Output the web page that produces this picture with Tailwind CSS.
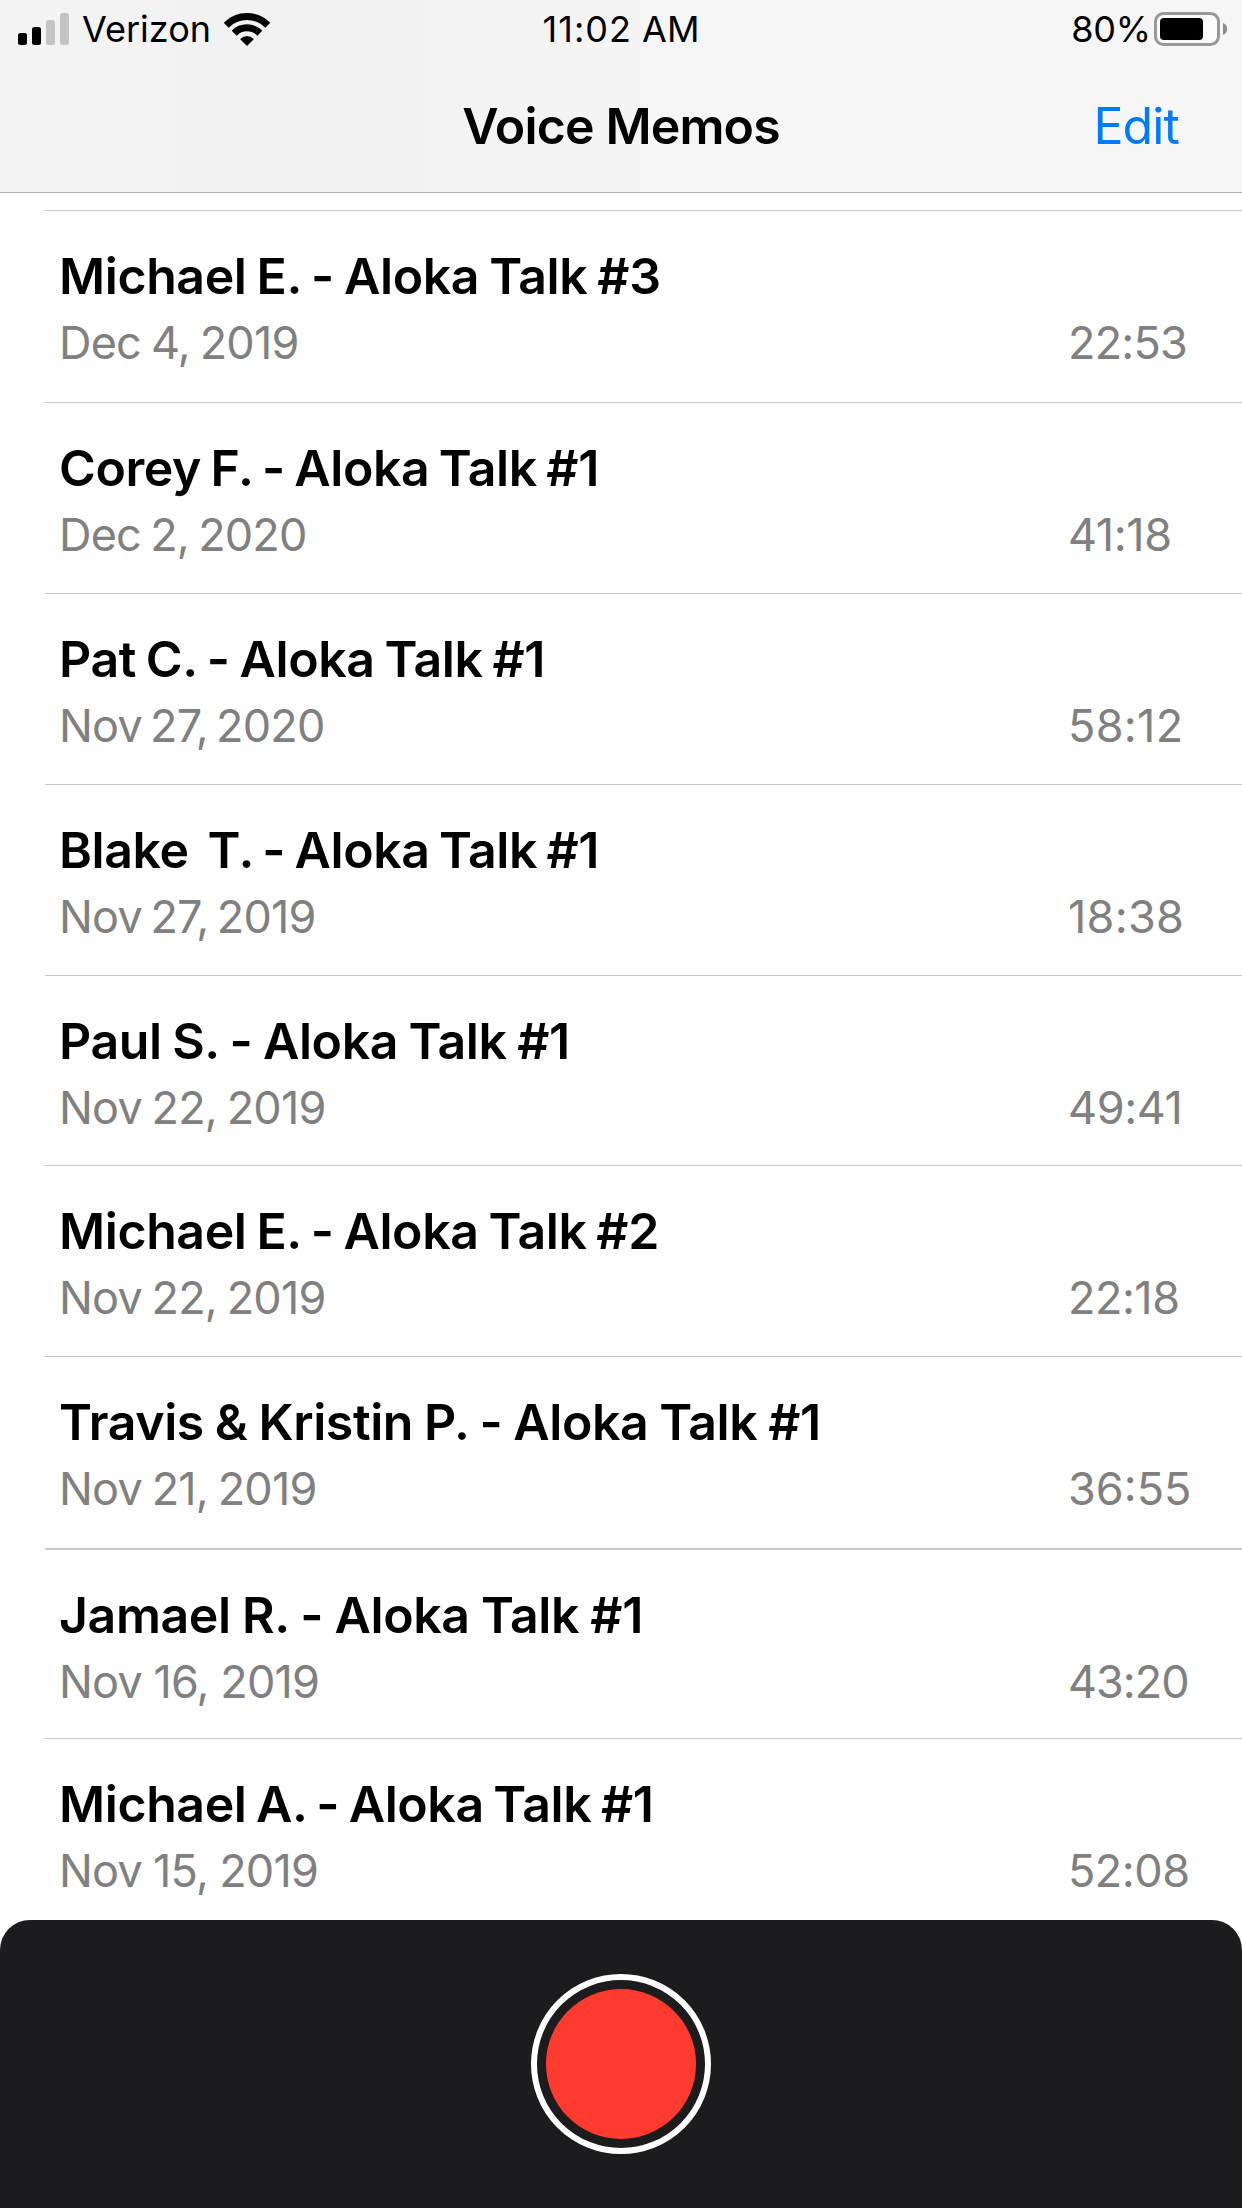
<!DOCTYPE html>
<html lang="en">
<head>
<meta charset="utf-8">
<title>Voice Memos</title>
<script src="https://cdn.jsdelivr.net/npm/@tailwindcss/browser@4"></script>
</head>
<body class="bg-[#fefefe]">
<div class="w-[1242px] h-[2208px] flex flex-col overflow-hidden font-['Inter',sans-serif] text-black bg-[#fefefe]">

  <header class="h-[193px] shrink-0 border-b border-[#b2b2b2] bg-linear-to-r from-[#f4f4f4] from-0% via-[#f1f1f1] via-25% to-[#f6f6f6] to-60%">
    <!-- status bar -->
    <div class="h-[58px] grid grid-cols-3 items-center text-[36px] leading-[58px]">
      <div class="flex items-center pl-[18px]">
        <svg class="w-[51px] h-[58px]" viewBox="0 0 51 58">
          <rect x="0" y="33" width="9" height="12" rx="2.5" fill="#000"/>
          <rect x="14" y="27" width="9" height="18" rx="2.5" fill="#000"/>
          <rect x="28" y="20" width="9" height="25" rx="2.5" fill="#c4c4c4"/>
          <rect x="42" y="13" width="9" height="32" rx="2.5" fill="#c4c4c4"/>
        </svg>
        <span class="ml-[13px]">Verizon</span>
        <svg class="ml-[12px] w-[48px] h-[58px]" viewBox="0 0 48 58" fill="none" stroke="#000">
          <path d="M3.2 25.2A29.4 29.4 0 0 1 44.8 25.2" stroke-width="7"/>
          <path d="M11.2 33.2A18 18 0 0 1 36.8 33.2" stroke-width="7"/>
          <path d="M24 45.5L17.6 39.2A9 9 0 0 1 30.4 39.2Z" fill="#000" stroke-width="0.8" stroke-linejoin="round"/>
        </svg>
      </div>
      <div class="text-center"><span class="tracking-[1px]">11:02</span> AM</div>
      <div class="flex items-center justify-end pr-[14px]">
        <span class="tracking-[-0.2px]">80%</span>
        <svg class="ml-[3px] w-[74px] h-[58px]" viewBox="0 0 74 58">
          <rect x="1.5" y="13.5" width="63" height="31" rx="8" fill="#fafafa" stroke="#999" stroke-width="3"/>
          <rect x="6" y="18" width="43" height="22" rx="4" fill="#000"/>
          <path d="M69 23C74.500 24.500 74.500 33.500 69 35Z" fill="#8e8e8e"/>
        </svg>
      </div>
    </div>
    <!-- navigation bar -->
    <div class="grid grid-cols-3 pt-[38px] text-[50px] leading-[60px]">
      <h1 class="col-start-2 text-center font-semibold tracking-[-0.85px]">Voice Memos</h1>
      <a class="text-right pr-[63px] text-[#007aff] tracking-[-0.9px]">Edit</a>
    </div>
  </header>

  <main class="mt-[17px] ml-[45px] h-[1710px] shrink-0 overflow-hidden whitespace-nowrap">
    <article class="h-[192px] border-t border-[#c8c8c8] pt-[35px] pl-[14px]">
      <h2 class="text-[50px] leading-[60px] font-semibold tracking-[-0.4px] [word-spacing:-2.1px]">Michael E. - Aloka Talk #3</h2>
      <div class="mt-[10px] flex justify-between text-[45px] leading-[54px] text-[#808080]"><span class="tracking-[-0.8px] [word-spacing:-2px]">Dec 4, 2019</span><span class="w-[174px] tracking-[-0.8px]">22:53</span></div>
    </article>
    <article class="h-[191px] border-t border-[#c8c8c8] pt-[35px] pl-[14px]">
      <h2 class="text-[50px] leading-[60px] font-semibold tracking-[-0.4px] [word-spacing:-2.7px]">Corey F. - Aloka Talk #1</h2>
      <div class="mt-[10px] flex justify-between text-[45px] leading-[54px] text-[#808080]"><span class="tracking-[-0.8px] [word-spacing:-2.7px]">Dec 2, 2020</span><span class="w-[174px] tracking-[-0.4px]">41:18</span></div>
    </article>
    <article class="h-[191px] border-t border-[#c8c8c8] pt-[35px] pl-[14px]">
      <h2 class="text-[50px] leading-[60px] font-semibold tracking-[-0.4px] [word-spacing:-2.3px]">Pat C. - Aloka Talk #1</h2>
      <div class="mt-[10px] flex justify-between text-[45px] leading-[54px] text-[#808080]"><span class="tracking-[-0.8px] [word-spacing:-3.7px]">Nov 27, 2020</span><span class="w-[174px] tracking-[0.3px]">58:12</span></div>
    </article>
    <article class="h-[191px] border-t border-[#c8c8c8] pt-[35px] pl-[14px]">
      <h2 class="text-[50px] leading-[60px] font-semibold tracking-[-0.4px] [word-spacing:-2.8px]">Blake&nbsp; T. - Aloka Talk #1</h2>
      <div class="mt-[10px] flex justify-between text-[45px] leading-[54px] text-[#808080]"><span class="tracking-[-0.8px] [word-spacing:-3.3px]">Nov 27, 2019</span><span class="w-[174px] tracking-[0.3px]">18:38</span></div>
    </article>
    <article class="h-[190px] border-t border-[#c8c8c8] pt-[35px] pl-[14px]">
      <h2 class="text-[50px] leading-[60px] font-semibold tracking-[-0.4px] [word-spacing:-1.6px]">Paul S. - Aloka Talk #1</h2>
      <div class="mt-[10px] flex justify-between text-[45px] leading-[54px] text-[#808080]"><span class="tracking-[-0.8px] [word-spacing:-2.2px]">Nov 22, 2019</span><span class="w-[174px] tracking-[-0.4px]">49:41</span></div>
    </article>
    <article class="h-[191px] border-t border-[#c8c8c8] pt-[35px] pl-[14px]">
      <h2 class="text-[50px] leading-[60px] font-semibold tracking-[-0.4px] [word-spacing:-2.3px]">Michael E. - Aloka Talk #2</h2>
      <div class="mt-[10px] flex justify-between text-[45px] leading-[54px] text-[#808080]"><span class="tracking-[-0.8px] [word-spacing:-2.2px]">Nov 22, 2019</span><span class="w-[174px] tracking-[-0.5px]">22:18</span></div>
    </article>
    <article class="h-[192px] border-t border-[#c8c8c8] pt-[35px] pl-[14px]">
      <h2 class="text-[50px] leading-[60px] font-semibold tracking-[-0.4px] [word-spacing:-1.3px]">Travis &amp; Kristin P. - Aloka Talk #1</h2>
      <div class="mt-[10px] flex justify-between text-[45px] leading-[54px] text-[#808080]"><span class="tracking-[-0.8px] [word-spacing:-2.1px]">Nov 21, 2019</span><span class="w-[174px]">36:55</span></div>
    </article>
    <article class="h-[190px] border-t-2 border-[#c8c8c8] pt-[35px] pl-[14px]">
      <h2 class="text-[50px] leading-[60px] font-semibold tracking-[-0.4px] [word-spacing:-0.8px]">Jamael R. - Aloka Talk #1</h2>
      <div class="mt-[10px] flex justify-between text-[45px] leading-[54px] text-[#808080]"><span class="tracking-[-0.8px] [word-spacing:-0.3px]">Nov 16, 2019</span><span class="w-[174px] tracking-[-1px]">43:20</span></div>
    </article>
    <article class="h-[182px] border-t border-[#c8c8c8] pt-[35px] pl-[14px]">
      <h2 class="text-[50px] leading-[60px] font-semibold tracking-[-0.4px] [word-spacing:-2.6px]">Michael A. - Aloka Talk #1</h2>
      <div class="mt-[10px] flex justify-between text-[45px] leading-[54px] text-[#808080]"><span class="tracking-[-0.8px] [word-spacing:-0.7px]">Nov 15, 2019</span><span class="w-[174px] tracking-[-0.5px]">52:08</span></div>
    </article>
  </main>

  <footer class="h-[288px] shrink-0 rounded-t-[30px] bg-[#1c1c1e] flex justify-center pt-[54px]">
    <button aria-label="Record" class="size-[180px] rounded-full border-6 border-white flex items-center justify-center">
      <span class="size-[150px] rounded-full bg-[#ff3b30]"></span>
    </button>
  </footer>
</div>
</body>
</html>
